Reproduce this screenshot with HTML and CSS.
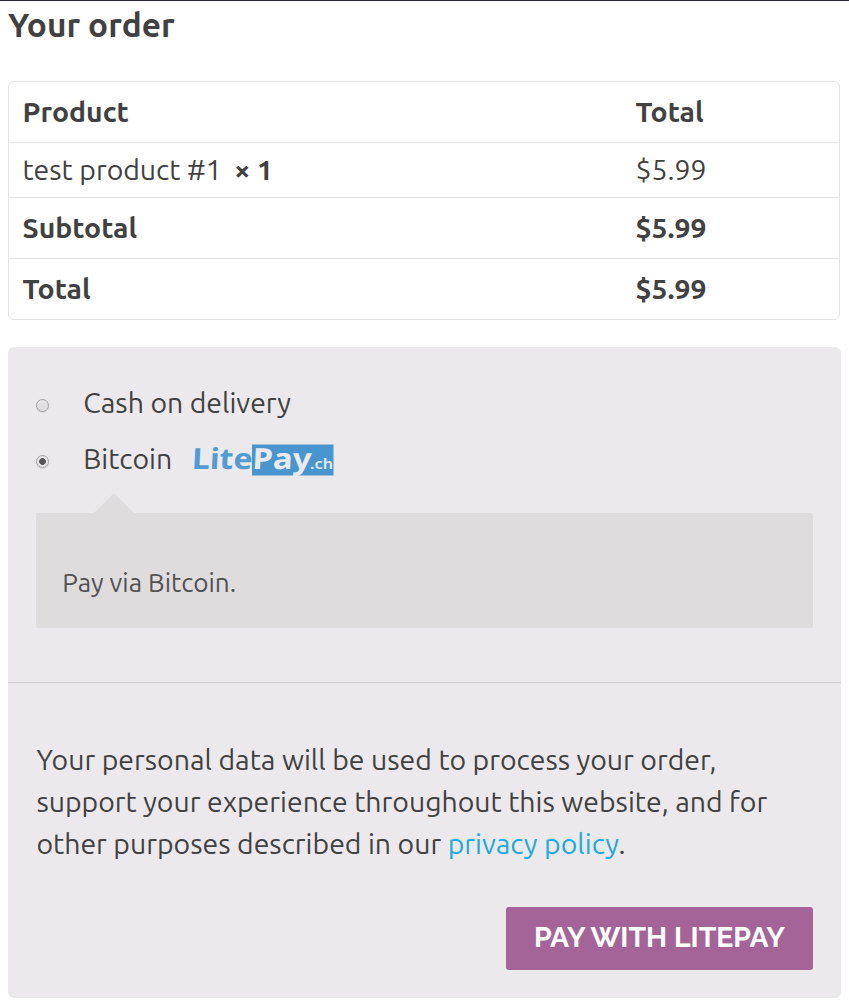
FILE: index.html
```
<!DOCTYPE html>
<html lang="en">
<head>
<meta charset="utf-8">
<title>Checkout</title>
<link rel="stylesheet" href="styles.css">
</head>
<body>
<main class="checkout">
  <h1 class="title">Your order</h1>
  <section class="order">
    <div class="row head"><span>Product</span><span>Total</span></div>
    <div class="row item"><span>test product #1<b class="qty">× 1</b></span><span>$5.99</span></div>
    <div class="row"><span>Subtotal</span><span>$5.99</span></div>
    <div class="row"><span>Total</span><span>$5.99</span></div>
  </section>
  <section class="payment">
    <div class="methods">
      <div class="method"><i class="radio"></i><span>Cash on delivery</span></div>
      <div class="method"><i class="radio checked"></i><span>Bitcoin</span>
        <svg class="logo" width="142" height="32" viewBox="0 0 142 32">
          <rect x="60" y="0.5" width="81.5" height="31" fill="#4896d0"/>
          <text class="logo-lite" transform="translate(-0.5 24.7) skewX(-3)" textLength="60.5" lengthAdjust="spacingAndGlyphs">Lite</text>
          <text class="logo-pay" transform="translate(60 24.7) skewX(-3)" textLength="59" lengthAdjust="spacingAndGlyphs">Pay</text>
          <text class="logo-ch" x="118" y="24.7" textLength="23" lengthAdjust="spacingAndGlyphs">.ch</text>
        </svg>
      </div>
      <div class="box">Pay via Bitcoin.</div>
    </div>
    <div class="place">
      <p class="terms">Your personal data will be used to process your order,<br>support your experience throughout this website, and for<br>other purposes described in our <a class="link">privacy policy</a>.</p>
      <button class="pay">PAY WITH LITEPAY</button>
    </div>
  </section>
</main>
</body>
</html>
```
FILE: styles.css
```
* { box-sizing: border-box; }
body { margin: 0; background: #fff; color: #414141; font: 28.42px/42px Ubuntu, "Noto Sans", sans-serif; white-space: nowrap; }
.checkout { border-top: 1px solid #25262e; padding: 0 8px; height: 1008px; }
.title { margin: 0; height: 80px; font-size: 33.4px; line-height: 48px; font-weight: 700; }
.order { width: 832px; border: 1px solid #e3e3e3; border-radius: 6px; }
.row { display: grid; grid-template-columns: 613px 1fr; align-items: center; height: 61px; padding-left: 13.5px; border-top: 1px solid #e3e3e3; font-weight: 700; }
.row.head { height: 60px; border-top: 0; }
.row.item { height: 55px; font-weight: 400; }
.qty { margin-left: 12.5px; }
.payment { width: 833px; height: 651px; margin-top: 27px; background: #ebe9eb; border-radius: 6px; }
.methods { height: 336px; padding: 28px 28px 0; border-bottom: 1px solid #d0ced0; }
.method { display: flex; align-items: center; height: 56px; }
.radio { width: 13px; height: 13px; margin: 5px 34.3px 0 0; border: 1px solid #a3a1a3; border-radius: 50%; background: linear-gradient(#e6e5e6, #dddcdd); box-shadow: 0 1px 1px #d5d3d5; }
.radio.checked { background: radial-gradient(circle, #555 0 3px, #e8e7e8 3.7px); }
.logo { margin: 2px 0 0 20px; overflow: visible; font-family: "Noto Sans", sans-serif; font-weight: 700; }
.logo-lite { fill: #539bd3; font-size: 29px; }
.logo-pay { fill: #ebe9eb; font-size: 29px; }
.logo-ch { fill: #e3e9ef; font-size: 14px; font-weight: 600; }
.box { position: relative; display: flex; align-items: center; height: 115px; margin-top: 26px; padding: 24px 26.3px 0; background: #dfdcde; border-radius: 2px; color: #515151; font-size: 26.1px; }
.box::before { content: ""; position: absolute; left: 58px; top: -20px; border: solid transparent; border-width: 0 20px 20px; border-bottom-color: #dfdcde; }
.place { display: flex; flex-direction: column; padding: 56px 28px 0; }
.terms { margin: 0; height: 168px; padding-left: 0.4px; }
.link { color: #21a9de; }
.pay { align-self: flex-end; width: 307px; height: 63px; padding: 0 0 3px; border: 0; border-radius: 3px; background: #a46497; color: #fff; font: 700 28.36px/42px Raleway, Lato, sans-serif; }
```
